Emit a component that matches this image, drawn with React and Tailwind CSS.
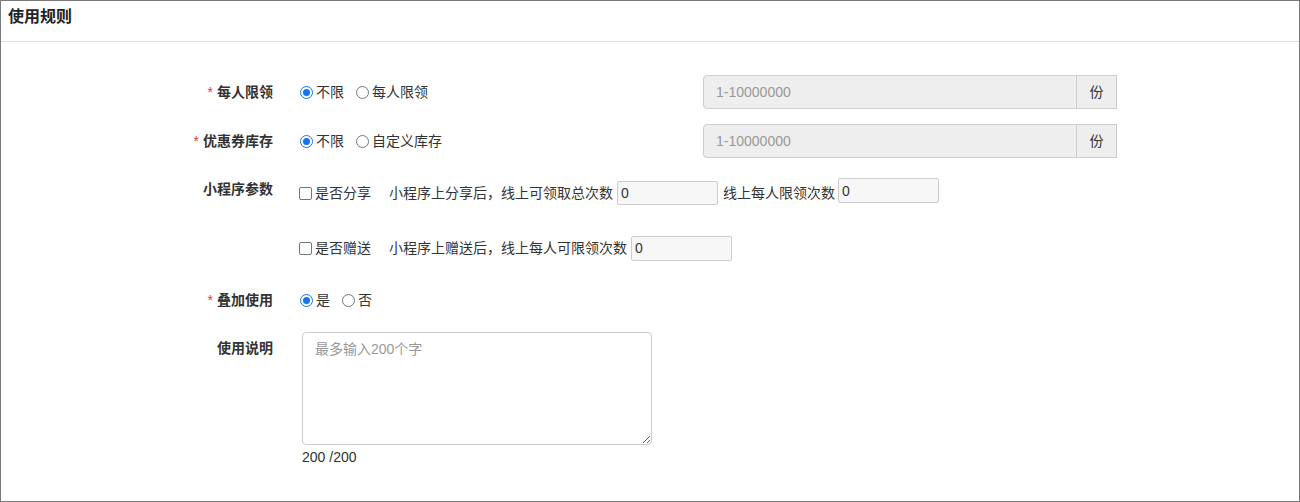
import React from 'react';

const font = { fontFamily: '"Liberation Sans", "Noto Sans CJK SC", sans-serif' };

const Radio = ({ checked, label }) => (
  <label className="flex items-center mr-[12px]">
    {checked ? (
      <span className="w-[13px] h-[13px] rounded-full border border-[#1a73e8] flex items-center justify-center mr-[3px]">
        <span className="w-[7px] h-[7px] rounded-full bg-[#1a73e8]" />
      </span>
    ) : (
      <span className="w-[13px] h-[13px] rounded-full border border-[#767676] mr-[3px]" />
    )}
    <span>{label}</span>
  </label>
);

const Checkbox = ({ label }) => (
  <label className="flex items-center">
    <span className="w-[13px] h-[13px] rounded-[2px] border border-[#767676] mr-[3px]" />
    <span>{label}</span>
  </label>
);

const Label = ({ required, children, className = '' }) => (
  <div className={`w-[272px] shrink-0 text-right font-bold leading-[20px] ${className}`}>
    {required && <span className="text-[#e4393c] font-normal mr-[4px]">*</span>}
    {children}
  </div>
);

const RangeInput = () => (
  <div className="flex h-[34px] w-[414px]">
    <div className="flex-1 flex items-center bg-[#eeeeee] border border-[#cccccc] rounded-l-[4px] px-[12px] text-[#999]">
      1-10000000
    </div>
    <div className="w-[40px] flex items-center justify-center bg-[#eeeeee] border border-l-0 border-[#cccccc]">
      份
    </div>
  </div>
);

const SmallInput = ({ className = '' }) => (
  <div className={`w-[101px] bg-[#f7f7f7] border border-[#cccccc] rounded-[2px] px-[3px] flex items-center text-[#333] ${className}`}>
    0
  </div>
);

export default function App() {
  return (
    <div style={font} className="w-[1300px] h-[502px] border border-[#7a7a7a] bg-white text-[14px] text-[#333] overflow-hidden">
      {/* title bar */}
      <div className="h-[41px] border-b border-[#dddddd] px-[7px] pt-[5px]">
        <h2 className="text-[16px] font-bold leading-[22px] text-[#222]">使用规则</h2>
      </div>

      {/* 每人限领 */}
      <div className="flex items-center h-[34px] mt-[33px]">
        <Label required>每人限领</Label>
        <div className="flex items-center w-[430px] pl-[27px] leading-[20px]">
          <Radio checked label="不限" />
          <Radio label="每人限领" />
        </div>
        <RangeInput />
      </div>

      {/* 优惠券库存 */}
      <div className="flex items-center h-[34px] mt-[15px]">
        <Label required>优惠券库存</Label>
        <div className="flex items-center w-[430px] pl-[27px] leading-[20px]">
          <Radio checked label="不限" />
          <Radio label="自定义库存" />
        </div>
        <RangeInput />
      </div>

      {/* 小程序参数 - 分享 */}
      <div className="flex items-start h-[28px] mt-[20px] leading-[20px]">
        <Label className="mt-[1px]">小程序参数</Label>
        <div className="flex items-start pl-[26px]">
          <div className="mt-[5px]"><Checkbox label="是否分享" /></div>
          <span className="ml-[18px] mt-[5px]">小程序上分享后，线上可领取总次数</span>
          <SmallInput className="h-[24px] ml-[4px] mt-[3px]" />
          <span className="ml-[5px] mt-[5px]">线上每人限领次数</span>
          <SmallInput className="h-[25px] ml-[3px]" />
        </div>
      </div>

      {/* 小程序参数 - 赠送 */}
      <div className="flex items-center h-[26px] mt-[29px] leading-[20px]">
        <div className="w-[272px] shrink-0" />
        <div className="flex items-center pl-[26px]">
          <Checkbox label="是否赠送" />
          <span className="ml-[18px]">小程序上赠送后，线上每人可限领次数</span>
          <SmallInput className="h-[25px] ml-[4px]" />
        </div>
      </div>

      {/* 叠加使用 */}
      <div className="flex items-center h-[20px] mt-[29px] leading-[20px]">
        <Label required>叠加使用</Label>
        <div className="flex items-center pl-[27px]">
          <Radio checked label="是" />
          <Radio label="否" />
        </div>
      </div>

      {/* 使用说明 */}
      <div className="flex items-start mt-[22px]">
        <Label className="mt-[6px]">使用说明</Label>
        <div className="pl-[29px]">
          <textarea
            placeholder="最多输入200个字"
            className="block w-[350px] h-[113px] border border-[#cccccc] rounded-[4px] px-[12px] py-[6px] text-[14px] leading-[20px] placeholder:text-[#999] outline-none"
          />
          <div className="leading-[20px] mt-[2px]">200 /200</div>
        </div>
      </div>
    </div>
  );
}
